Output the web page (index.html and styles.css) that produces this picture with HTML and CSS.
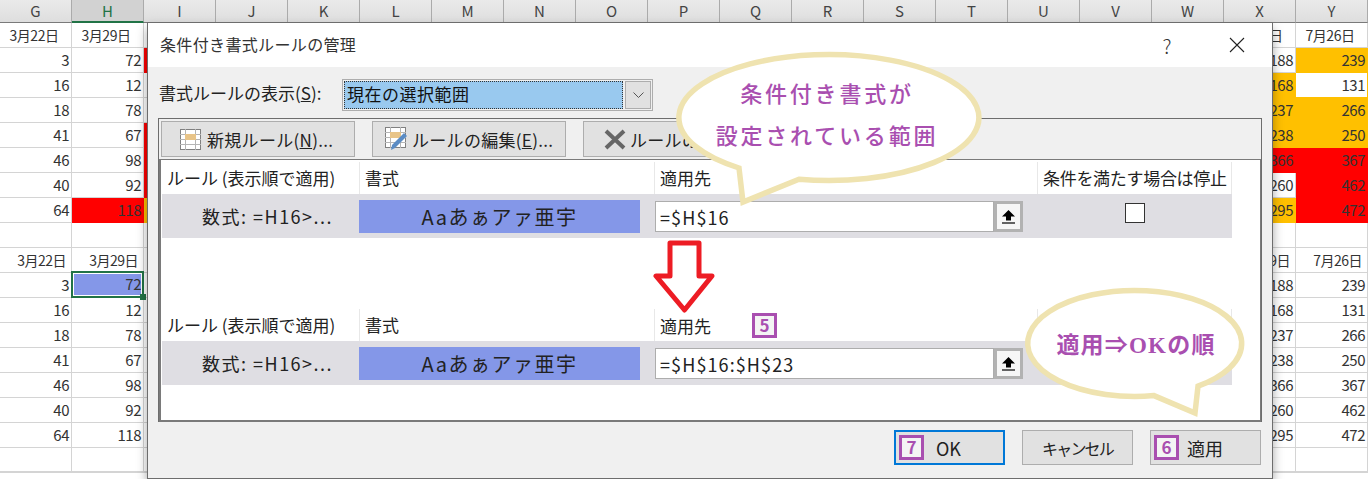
FILE: index.html
```html
<!DOCTYPE html>
<html lang="ja">
<head>
    <meta charset="UTF-8">
    <title>条件付き書式ルールの管理</title>
    <link rel="stylesheet" href="styles.css">
</head>
<body>

<div class="stage">

    <div class="col-headers">
        <div class="col-header">G</div>
        <div class="col-header selected">H</div>
        <div class="col-header">I</div>
        <div class="col-header">J</div>
        <div class="col-header">K</div>
        <div class="col-header">L</div>
        <div class="col-header">M</div>
        <div class="col-header">N</div>
        <div class="col-header">O</div>
        <div class="col-header">P</div>
        <div class="col-header">Q</div>
        <div class="col-header">R</div>
        <div class="col-header">S</div>
        <div class="col-header">T</div>
        <div class="col-header">U</div>
        <div class="col-header">V</div>
        <div class="col-header">W</div>
        <div class="col-header">X</div>
        <div class="col-header">Y</div>
    </div>

    <table class="sheet">
        <colgroup>
            <col class="col-std">
            <col class="col-std">
            <col class="col-hidden">
            <col class="col-std">
            <col class="col-std">
        </colgroup>
        <tr class="date-row center">
            <td>3月22日</td><td>3月29日</td><td></td><td>7月19日</td><td>7月26日</td>
        </tr>
        <tr><td>3</td><td>72</td><td class="red"></td><td>188</td><td class="orange">239</td></tr>
        <tr><td>16</td><td>12</td><td></td><td class="orange">168</td><td class="under-orange">131</td></tr>
        <tr><td>18</td><td>78</td><td></td><td class="orange">237</td><td class="orange">266</td></tr>
        <tr><td>41</td><td>67</td><td class="red"></td><td class="orange">238</td><td class="orange">250</td></tr>
        <tr><td>46</td><td>98</td><td class="red"></td><td class="red">366</td><td class="red">367</td></tr>
        <tr><td>40</td><td>92</td><td class="red"></td><td>260</td><td class="red">462</td></tr>
        <tr><td>64</td><td class="red">118</td><td class="orange"></td><td class="orange">295</td><td class="red">472</td></tr>
        <tr><td></td><td></td><td></td><td></td><td></td></tr>
        <tr class="date-row">
            <td>3月22日</td><td>3月29日</td><td></td><td>7月19日</td><td>7月26日</td>
        </tr>
        <tr><td>3</td><td class="active-cell"><span class="active-fill">72</span></td><td></td><td>188</td><td>239</td></tr>
        <tr><td>16</td><td>12</td><td></td><td>168</td><td>131</td></tr>
        <tr><td>18</td><td>78</td><td></td><td>237</td><td>266</td></tr>
        <tr><td>41</td><td>67</td><td></td><td>238</td><td>250</td></tr>
        <tr><td>46</td><td>98</td><td></td><td>366</td><td>367</td></tr>
        <tr><td>40</td><td>92</td><td></td><td>260</td><td>462</td></tr>
        <tr><td>64</td><td>118</td><td></td><td>295</td><td>472</td></tr>
        <tr class="last-row"><td></td><td></td><td></td><td></td><td></td></tr>
    </table>

    <div class="dialog">
        <div class="title-bar">
            <span class="title-text">条件付き書式ルールの管理</span>
            <div class="title-buttons">
                <span class="title-btn">?</span>
                <span class="title-btn">
                    <svg width="16" height="16" viewBox="0 0 16 16"><path d="M1 1L15 15M15 1L1 15" stroke="#222" stroke-width="1.1" fill="none"/></svg>
                </span>
            </div>
        </div>

        <div class="dialog-body">
            <div class="show-row">
                <span class="show-label">書式ルールの表示(<u>S</u>):</span>
                <div class="select-box">
                    <span class="select-value">現在の選択範囲</span>
                    <span class="select-arrow">
                        <svg width="11" height="6" viewBox="0 0 11 6"><path d="M0.5 0.5L5.5 5.5L10.5 0.5" stroke="#555" fill="none"/></svg>
                    </span>
                </div>
            </div>

            <div class="rule-group">
                <div class="toolbar">
                    <button class="tool-btn">
                        <svg class="tool-icon" width="21" height="21" viewBox="0 0 21 21">
                            <rect x="0.5" y="0.5" width="20" height="20" fill="#fff" stroke="#808080"/>
                            <path d="M0 5.500H21M0 10.500H21M0 15.500H21M5.500 0V21M15.500 0V21" stroke="#b5b5b5" fill="none"/>
                            <rect x="5" y="5" width="11" height="6" fill="#e8c488"/>
                        </svg>
                        <span>新規ルール(<u>N</u>)...</span>
                    </button>
                    <button class="tool-btn">
                        <svg class="tool-icon" width="24" height="24" viewBox="0 0 24 24">
                            <rect x="0.5" y="0.5" width="20" height="20" fill="#fff" stroke="#808080"/>
                            <path d="M0 5.500H21M0 10.500H21M0 15.500H21M5.500 0V21M15.500 0V21" stroke="#b5b5b5" fill="none"/>
                            <rect x="5" y="5" width="11" height="6" fill="#e8c488"/>
                            <path d="M7 18L19 6L22 9L10 21L6 23Z" fill="#5b8cc4"/>
                        </svg>
                        <span>ルールの編集(<u>E</u>)...</span>
                    </button>
                    <button class="tool-btn">
                        <svg class="tool-icon" width="22" height="21" viewBox="0 0 22 21"><path d="M2 2L20 19M20 2L2 19" stroke="#666" stroke-width="4" fill="none"/></svg>
                        <span>ルールの</span>
                    </button>
                </div>

                <div class="rule-list">
                    <div class="rule-block">
                        <div class="rule-head">
                            <div class="head-cell">ルール (表示順で適用)</div>
                            <div class="head-cell">書式</div>
                            <div class="head-cell">適用先</div>
                            <div class="head-cell stop-head">条件を満たす場合は停止</div>
                        </div>
                        <div class="rule-row">
                            <div class="rule-name">数式: =H16&gt;...</div>
                            <div class="rule-format"><span class="format-sample">Aaあぁアァ亜宇</span></div>
                            <div class="rule-range">
                                <span class="range-input">=$H$16</span>
                                <span class="range-btn">
                                    <svg width="13" height="14" viewBox="0 0 13 14"><path d="M6.5 0L13 6.5H9V10.500H4V6.500H0Z" fill="#000"/><path d="M0 13H13" stroke="#000" stroke-width="1.200"/></svg>
                                </span>
                            </div>
                            <div class="rule-stop"><span class="check-box"></span></div>
                        </div>
                    </div>

                    <div class="rule-block second">
                        <div class="rule-head">
                            <div class="head-cell">ルール (表示順で適用)</div>
                            <div class="head-cell">書式</div>
                            <div class="head-cell with-badge">適用先 <span class="step-badge">5</span></div>
                            <div class="head-cell"></div>
                        </div>
                        <div class="rule-row">
                            <div class="rule-name">数式: =H16&gt;...</div>
                            <div class="rule-format"><span class="format-sample">Aaあぁアァ亜宇</span></div>
                            <div class="rule-range">
                                <span class="range-input">=$H$16:$H$23</span>
                                <span class="range-btn">
                                    <svg width="13" height="14" viewBox="0 0 13 14"><path d="M6.5 0L13 6.5H9V10.500H4V6.500H0Z" fill="#000"/><path d="M0 13H13" stroke="#000" stroke-width="1.200"/></svg>
                                </span>
                            </div>
                            <div class="rule-stop"></div>
                        </div>
                    </div>
                </div>
            </div>

            <div class="footer">
                <button class="foot-btn default"><span class="step-badge">7</span><span class="ok-label">OK</span></button>
                <button class="foot-btn center-btn">キャンセル</button>
                <button class="foot-btn"><span class="step-badge">6</span><span class="apply-label">適用</span></button>
            </div>
        </div>
    </div>

    <!-- 注釈 -->
    <svg class="down-arrow" width="66" height="78" viewBox="651 238 66 78">
        <path d="M670 243H699V276H712L684.500 310L656 276H670Z" fill="#fff" stroke="#ed1c24" stroke-width="5" stroke-linejoin="round"/>
    </svg>

    <div class="callout callout-top">
        <svg class="callout-shape" width="320" height="162" viewBox="670 46 320 162">
            <path d="M739 168A150 63 0 1 1 799 179.300L743 202Z" fill="#fff" stroke="#efe3b0" stroke-width="5.500"/>
        </svg>
        <div class="callout-text">条件付き書式が<br>設定されている範囲</div>
    </div>

    <div class="callout callout-bottom">
        <svg class="callout-shape" width="234" height="136" viewBox="1018 282 234 136">
            <path d="M1198 386.200A107 53 0 1 0 1154 395.600L1195 413Z" fill="#fff" stroke="#efe3b0" stroke-width="5.500"/>
        </svg>
        <div class="callout-text">適用⇒OKの順</div>
    </div>

</div>

</body>
</html>
```

FILE: styles.css
```css
html, body {
    margin: 0;
    padding: 0;
    background-color: #fff;
}

body {
    font-family: "Noto Sans CJK JP", "Noto Sans", sans-serif;
    color: #222;
}

.stage {
    position: relative;
    width: 1368px;
    height: 479px;
    overflow: hidden;
}

/* シート */
.col-headers {
    display: flex;
    height: 23px;
}

.col-header {
    width: 72px;
    box-sizing: border-box;
    text-align: center;
    font-size: 15px;
    line-height: 21px;
    color: #444;
    background: linear-gradient(#eaeaea, #dedede);
    border-right: 1px solid #ababab;
    border-bottom: 1px solid #7a7a7a;
}

.col-header.selected {
    background: #d2d2d2;
    color: #217346;
    border-bottom: 2px solid #217346;
}

.sheet {
    border-collapse: separate;
    border-spacing: 0;
    table-layout: fixed;
    width: 1368px;
    font-size: 15px;
    letter-spacing: -0.5px;
    color: #333;
}

.col-std {
    width: 72px;
}

.col-hidden {
    width: 1080px;
}

.sheet td {
    box-sizing: border-box;
    height: 25px;
    padding: 0 2px 0 0;
    text-align: right;
    line-height: 24px;
    border-right: 1px solid #d4d4d4;
    border-bottom: 1px solid #d4d4d4;
    white-space: nowrap;
    overflow: hidden;
}

.sheet .date-row td {
    padding-right: 5px;
    font-size: 14px;
}

.sheet .center td {
    text-align: center;
    padding-right: 3px;
}

.sheet .last-row td {
    border-bottom: 2px solid #d4d4d4;
}

.sheet td.red {
    background-color: #f00;
    border-color: #f00;
}

.sheet td.orange {
    background-color: #ffc000;
    border-color: #ffc000;
}

.sheet td.under-orange {
    border-color: #ffc000;
}

.sheet td.active-cell {
    position: relative;
    overflow: visible;
    padding: 0;
}

.active-fill {
    position: absolute;
    top: -2px;
    left: -1px;
    width: 73px;
    height: 27px;
    box-sizing: border-box;
    padding-right: 1px;
    line-height: 22px;
    background-color: #8497e8;
    border: 2px solid #217346;
    outline: 1px solid #fff;
    outline-offset: -3px;
}

.active-fill::after {
    content: "";
    position: absolute;
    right: -4px;
    bottom: -4px;
    width: 6px;
    height: 6px;
    background-color: #217346;
}

/* ダイアログ */
.dialog {
    position: absolute;
    left: 147px;
    top: 22px;
    width: 1126px;
    height: 457px;
    box-sizing: border-box;
    border: 1px solid #6d6d6d;
    background-color: #f0f0f0;
    box-shadow: 0 6px 10px rgba(0, 0, 0, 0.35);
    display: flex;
    flex-direction: column;
}

.title-bar {
    display: flex;
    align-items: center;
    justify-content: space-between;
    height: 44px;
    flex: none;
    background-color: #fff;
    padding-left: 12px;
}

.title-text {
    font-size: 16px;
    letter-spacing: 0.35px;
    color: #333;
    padding-bottom: 2px;
}

.title-buttons {
    display: flex;
}

.title-btn {
    display: flex;
    align-items: center;
    justify-content: center;
    width: 70px;
    height: 44px;
    font-size: 20px;
    font-weight: 300;
    color: #333;
}

.dialog-body {
    display: flex;
    flex-direction: column;
    flex: 1;
    padding: 12px 10px 0 10px;
}

.show-row {
    display: flex;
    align-items: center;
    height: 32px;
    font-size: 17px;
}

.show-label {
    width: 184px;
    padding: 0 0 6px 1px;
    box-sizing: border-box;
}

.select-box {
    display: flex;
    width: 311px;
    height: 32px;
    box-sizing: border-box;
    padding: 1px;
    gap: 2px;
    border: 1px solid #adadad;
    background-color: #f0f0f0;
}

.select-value {
    flex: 1;
    font-size: 17px;
    line-height: 26px;
    padding-left: 3px;
    letter-spacing: 0.5px;
    background-color: #99c9ef;
    outline: 1px dotted #333;
    outline-offset: -1px;
    color: #111;
}

.select-arrow {
    display: flex;
    align-items: center;
    justify-content: center;
    width: 26px;
    background-color: #e1e1e1;
    border: 1px solid #adadad;
    box-sizing: border-box;
}

.rule-group {
    margin-top: 7px;
    width: 1104px;
    height: 304px;
    box-sizing: border-box;
    border: 1px solid #6d6d6d;
    border-bottom: none;
    display: flex;
    flex-direction: column;
}

.toolbar {
    display: flex;
    gap: 17px;
    padding: 2px 0 0 2px;
    height: 38px;
    flex: none;
    box-sizing: border-box;
}

.tool-btn {
    display: flex;
    align-items: center;
    justify-content: flex-start;
    gap: 6px;
    width: 194px;
    height: 36px;
    padding: 0 0 0 18px;
    font-family: inherit;
    font-size: 17px;
    letter-spacing: 0.3px;
    color: #222;
    background-color: #e1e1e1;
    border: 1px solid #adadad;
    white-space: nowrap;
}

.tool-icon {
    flex: none;
}

.tool-btn:nth-child(2) {
    padding-left: 12px;
    gap: 3px;
}

.tool-btn:nth-child(3) {
    padding-left: 20px;
    gap: 4px;
}

.rule-list {
    flex: 1;
    margin-top: 2px;
    box-sizing: border-box;
    border: 2px solid #7a7a7a;
    border-top-width: 1px;
    border-right-width: 1px;
    background-color: #fff;
    padding: 2px 0 0 1px;
}

.rule-block.second {
    margin-top: 71px;
}

.rule-head, .rule-row {
    display: grid;
    grid-template-columns: 197px 295px 383px 195px;
    width: 1070px;
}

.rule-head {
    height: 32px;
}

.head-cell {
    font-size: 17px;
    line-height: 31px;
    padding-left: 5px;
    border-left: 1px solid #e8e8e8;
    white-space: nowrap;
}

.head-cell:first-child {
    border-left: none;
    padding-left: 5px;
}

.head-cell:last-child {
    border-right: 1px solid #e8e8e8;
}

.stop-head {
    letter-spacing: -0.3px;
}

.with-badge {
    display: flex;
    align-items: center;
    gap: 41px;
}

.rule-row {
    height: 44px;
    background-color: #dfdee3;
    font-size: 18px;
}

.rule-name {
    padding-left: 40px;
    line-height: 45px;
    white-space: nowrap;
    letter-spacing: 1.5px;
}

.rule-format {
    padding-top: 6px;
}

.format-sample {
    display: block;
    width: 281px;
    height: 33px;
    text-align: center;
    line-height: 33px;
    font-size: 20px;
    letter-spacing: 1.5px;
    background-color: #8497e8;
}

.rule-range {
    display: flex;
    padding: 7px 0 0 1px;
}

.range-input {
    width: 339px;
    height: 31px;
    box-sizing: border-box;
    border: 1px solid #adadad;
    background-color: #fff;
    padding-left: 4px;
    line-height: 30px;
    letter-spacing: 1.1px;
}

.range-btn {
    display: flex;
    align-items: center;
    justify-content: center;
    width: 29px;
    height: 31px;
    box-sizing: border-box;
    border: 3px solid #b2b2b2;
    background-color: #f6f6f6;
}

.rule-stop {
    display: flex;
    justify-content: center;
    padding-top: 9px;
}

.check-box {
    display: block;
    width: 20px;
    height: 20px;
    box-sizing: border-box;
    border: 1px solid #333;
    background-color: #fff;
}

.step-badge {
    display: inline-block;
    width: 25px;
    height: 25px;
    box-sizing: border-box;
    flex: none;
    border: 3px solid #a94fb0;
    background-color: #f4f4f4;
    color: #a94fb0;
    font-size: 17px;
    font-weight: 700;
    line-height: 18px;
    text-align: center;
    letter-spacing: 0;
}

.footer {
    display: flex;
    justify-content: flex-end;
    gap: 17px;
    margin-top: 8px;
    padding-right: 1px;
}

.foot-btn {
    display: flex;
    align-items: center;
    width: 111px;
    height: 35px;
    box-sizing: border-box;
    padding: 0 0 0 3px;
    font-family: inherit;
    font-size: 16px;
    color: #222;
    background-color: #e1e1e1;
    border: 1px solid #adadad;
}

.foot-btn.default {
    border: 2px solid #0078d7;
}

.foot-btn.center-btn {
    justify-content: center;
    padding: 0;
    letter-spacing: -1.8px;
}

.ok-label {
    margin-left: 12px;
    font-size: 18px;
}

.apply-label {
    margin-left: 8px;
    font-size: 18px;
}

/* 注釈 */
.down-arrow {
    position: absolute;
    left: 651px;
    top: 238px;
}

.callout {
    position: absolute;
}

.callout-shape {
    display: block;
}

.callout-top {
    left: 670px;
    top: 46px;
}

.callout-bottom {
    left: 1018px;
    top: 282px;
}

.callout-text {
    position: absolute;
    left: 0;
    right: 0;
    text-align: center;
    color: #a94fb0;
    white-space: nowrap;
    font-family: "Liberation Serif", "Noto Sans CJK JP", serif;
    font-weight: 500;
}

.callout-top .callout-text {
    top: 28px;
    padding-right: 6px;
    font-size: 22px;
    line-height: 42px;
    letter-spacing: 2.8px;
}

.callout-bottom .callout-text {
    top: 46px;
    padding-left: 2px;
    font-size: 23px;
    line-height: 36px;
    letter-spacing: 1.2px;
    font-weight: 700;
}
```
